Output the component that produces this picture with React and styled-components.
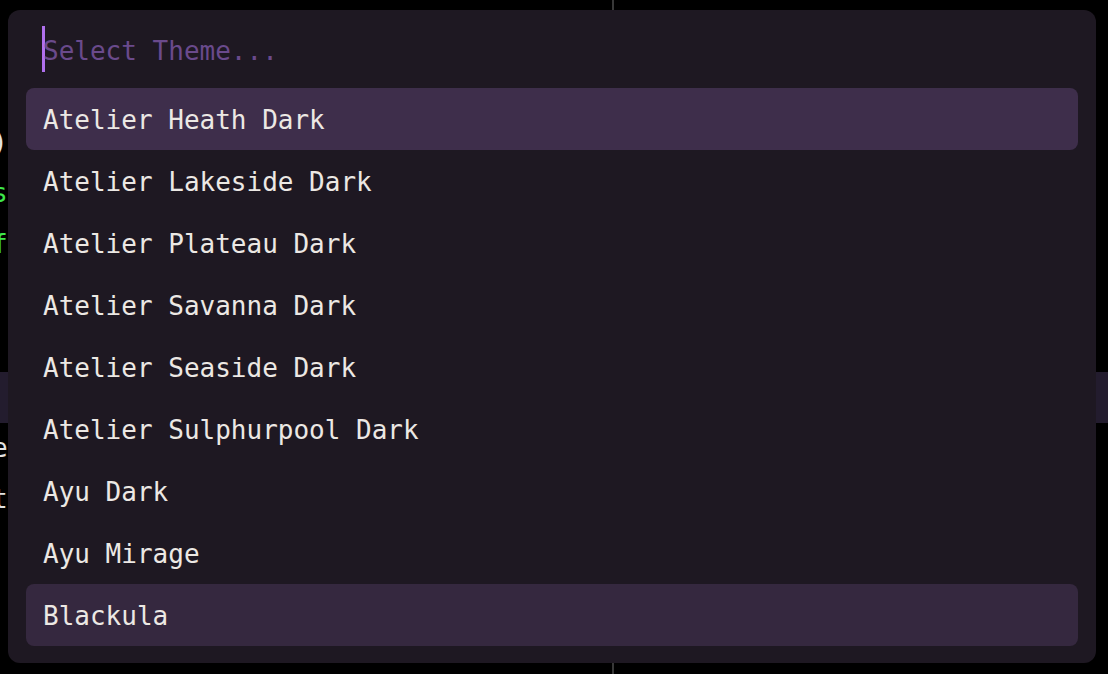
import styled, { createGlobalStyle } from 'styled-components';

const GlobalStyle = createGlobalStyle`
  html, body {
    margin: 0;
    padding: 0;
    background: #000;
    overflow: hidden;
  }
  * {
    box-sizing: border-box;
  }
`;

const Screen = styled.div`
  position: relative;
  width: 1108px;
  height: 674px;
  background: #000;
  font-family: 'DejaVu Sans Mono', 'Liberation Mono', monospace;
`;

const Editor = styled.div`
  display: flex;
  width: 100%;
  height: 100%;
`;

const Pane = styled.div`
  flex: ${(p) => (p.$width ? `0 0 ${p.$width}px` : '1')};
  display: flex;
  flex-direction: column;
  padding-top: 15px;
  overflow: hidden;
`;

const Divider = styled.div`
  flex: 0 0 2px;
  background: #383838;
`;

const CodeLine = styled.div`
  height: 51px;
  line-height: 51px;
  font-size: 26px;
  color: ${(p) => p.$color || '#e2e2e2'};
  background: ${(p) => (p.$current ? '#231c2e' : 'transparent')};
  margin-left: -8px;
  white-space: pre;
`;

const Palette = styled.div`
  position: absolute;
  left: 8px;
  top: 10px;
  width: 1088px;
  height: 653px;
  background: #1e1822;
  border-radius: 12px;
  padding: 0 18px 17px;
  display: flex;
  flex-direction: column;
`;

const SearchRow = styled.div`
  height: 78px;
  display: flex;
  align-items: center;
  padding-left: 16px;
`;

const Caret = styled.span`
  width: 3px;
  height: 46px;
  background: #b070ee;
`;

const Placeholder = styled.span`
  margin-left: -2px;
  padding-top: 3px;
  font-size: 26px;
  color: #6a4a8c;
  white-space: pre;
`;

const List = styled.div`
  display: flex;
  flex-direction: column;
`;

const Item = styled.div`
  height: 62px;
  display: flex;
  align-items: center;
  padding: 2px 0 0 17px;
  border-radius: 8px;
  font-size: 26px;
  color: #ece8e4;
  white-space: pre;
  background: ${(p) =>
    p.$selected ? '#3e2e4b' : p.$hover ? '#35283f' : 'transparent'};
`;

const leftLines = [
  { text: ' ' },
  { text: ' ' },
  { text: ')' },
  { text: 's', color: '#3ee84a' },
  { text: 'f', color: '#3ee84a' },
  { text: ' ' },
  { text: ' ' },
  { text: ' ', current: true },
  { text: 'e' },
  { text: 't' },
  { text: ' ' },
  { text: ' ' },
];

const themes = [
  'Atelier Heath Dark',
  'Atelier Lakeside Dark',
  'Atelier Plateau Dark',
  'Atelier Savanna Dark',
  'Atelier Seaside Dark',
  'Atelier Sulphurpool Dark',
  'Ayu Dark',
  'Ayu Mirage',
  'Blackula',
];

function App() {
  return (
    <>
      <GlobalStyle />
      <Screen>
        <Editor>
          <Pane $width={612}>
            {leftLines.map((line, i) => (
              <CodeLine key={i} $color={line.color} $current={line.current}>
                {line.text}
              </CodeLine>
            ))}
          </Pane>
          <Divider />
          <Pane>
            {leftLines.map((line, i) => (
              <CodeLine key={i} $current={line.current}>
                {' '}
              </CodeLine>
            ))}
          </Pane>
        </Editor>

        <Palette>
          <SearchRow>
            <Caret />
            <Placeholder>Select Theme...</Placeholder>
          </SearchRow>
          <List>
            {themes.map((name, i) => (
              <Item key={name} $selected={i === 0} $hover={i === themes.length - 1}>
                {name}
              </Item>
            ))}
          </List>
        </Palette>
      </Screen>
    </>
  );
}

export default App;
